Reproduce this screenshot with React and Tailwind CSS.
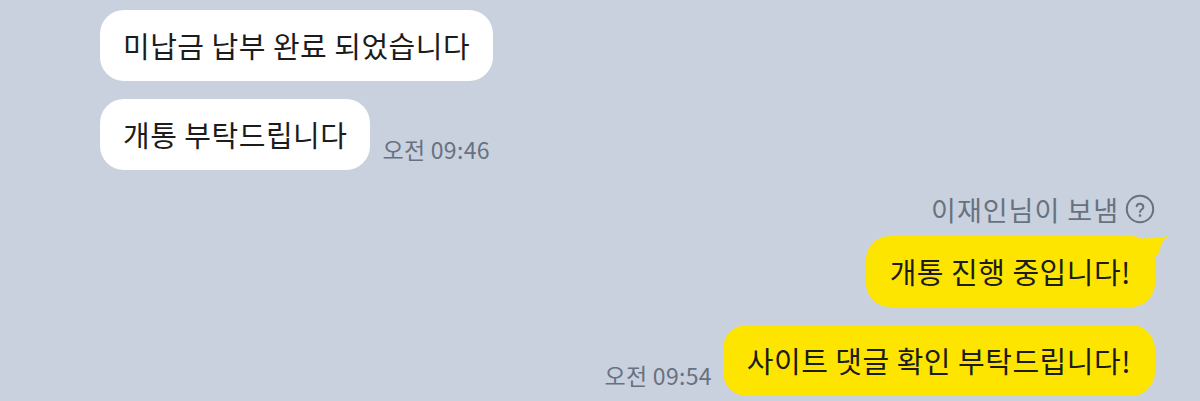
export default function App() {
  const font = { fontFamily: '"Noto Sans CJK KR", "Noto Sans", sans-serif' };
  return (
    <div
      className="w-[1200px] h-[401px] bg-[#c9d1de] overflow-hidden flex flex-col pl-[100px] pr-[45px] pt-[10px] text-[#1c1c1c]"
      style={font}
    >
      <div className="flex">
        <div className="h-[71px] px-[23px] flex items-center bg-white rounded-[24px] text-[29px] tracking-[0.5px]">
          미납금 납부 완료 되었습니다
        </div>
      </div>
      <div className="flex items-end gap-[12px] mt-[18px]">
        <div className="h-[71px] px-[23px] flex items-center bg-white rounded-[24px] text-[29px] tracking-[0.5px]">
          개통 부탁드립니다
        </div>
        <span className="text-[23px] tracking-[0.3px] text-[#68717f] mb-[9px] leading-none">오전 09:46</span>
      </div>
      <div className="flex justify-end items-center gap-[6px] mt-[24px] text-[#68717f]">
        <span className="text-[27px] tracking-[1px] leading-none">이재인님이 보냄</span>
        <svg width="30" height="30" viewBox="0 0 30 30" fill="none">
          <circle cx="15" cy="15" r="13.2" stroke="#68717f" strokeWidth="2" />
          <path
            d="M11.6 12.2a3.5 3.5 0 0 1 6.8 0.8c0 2.3-3.4 2.8-3.4 5"
            stroke="#68717f"
            strokeWidth="2"
            strokeLinecap="round"
          />
          <circle cx="15" cy="21.6" r="1.3" fill="#68717f" />
        </svg>
      </div>
      <div className="flex justify-end mt-[12px]">
        <div className="relative h-[71px] px-[24px] flex items-center bg-[#fee500] rounded-[24px] text-[29px] tracking-[0.5px]">
          개통 진행 중입니다!
          <svg
            className="absolute right-[-13px] top-0"
            width="24"
            height="24"
            viewBox="0 0 24 24"
          >
            <path d="M0 2 Q12 3 24 0 Q16 6 14 20 L0 20 Z" fill="#fee500" />
          </svg>
        </div>
      </div>
      <div className="flex justify-end items-end gap-[11px] mt-[18px]">
        <span className="text-[23px] tracking-[0.3px] text-[#68717f] mb-[9px] leading-none">오전 09:54</span>
        <div className="h-[71px] px-[24px] flex items-center bg-[#fee500] rounded-[24px] text-[29px] tracking-[0.5px]">
          사이트 댓글 확인 부탁드립니다!
        </div>
      </div>
    </div>
  );
}
